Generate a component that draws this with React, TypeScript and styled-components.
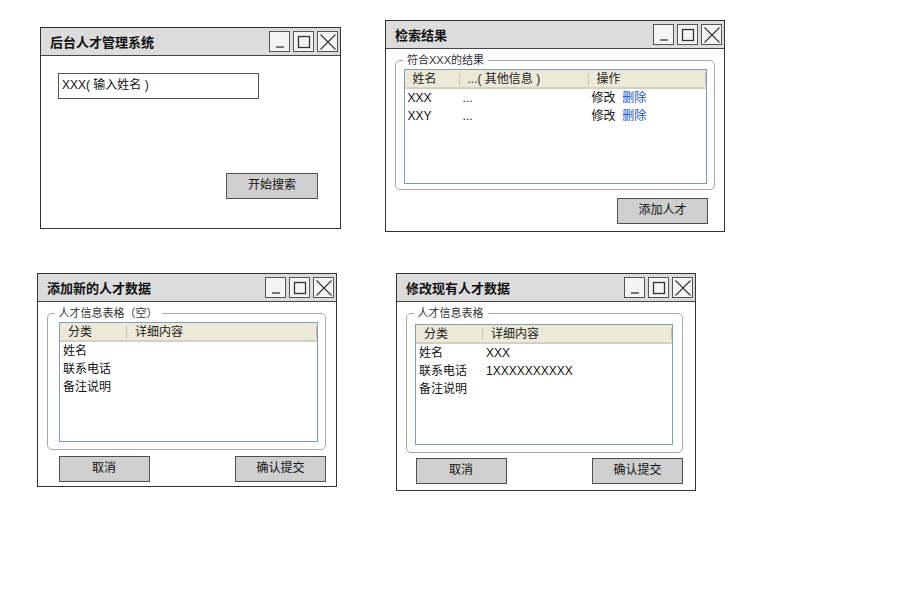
import React from 'react';
import styled, { createGlobalStyle } from 'styled-components';

const GlobalStyles = createGlobalStyle`
  html, body {
    margin: 0;
    padding: 0;
    background: #ffffff;
  }
  body {
    font-family: 'Liberation Sans', 'Noto Sans CJK SC', sans-serif;
    color: #1a1a1a;
  }
`;

const Canvas = styled.div`
  position: relative;
  width: 911px;
  height: 609px;
  background: #ffffff;
  overflow: hidden;
`;

interface IWin {
  $x: number;
  $y: number;
  $w: number;
  $h: number;
}

const WindowFrame = styled.div<IWin>`
  position: absolute;
  left: ${p => p.$x}px;
  top: ${p => p.$y}px;
  width: ${p => p.$w}px;
  height: ${p => p.$h}px;
  box-sizing: border-box;
  border: 1.5px solid #333;
  background: #ffffff;
  display: flex;
  flex-direction: column;
`;

const TitleBar = styled.div`
  height: 28px;
  flex: 0 0 28px;
  box-sizing: border-box;
  background: #dcdcdc;
  border-bottom: 1.5px solid #444;
  display: flex;
  align-items: center;
  padding-left: 9px;
  padding-right: 2px;
`;

const Title = styled.span`
  font-size: 13px;
  font-weight: 700;
  color: #111;
`;

const Controls = styled.div`
  margin-left: auto;
  display: flex;
  gap: 3px;
`;

const CtrlBtn = styled.div`
  width: 21px;
  height: 21px;
  box-sizing: border-box;
  border: 1.5px solid #555;
  background: #f4f4f4;
  display: flex;
  align-items: center;
  justify-content: center;
  svg {
    display: block;
  }
`;

const Body = styled.div<{ $pad: string }>`
  flex: 1;
  display: flex;
  flex-direction: column;
  padding: ${p => p.$pad};
`;

const InputBox = styled.div`
  width: 201px;
  height: 26px;
  box-sizing: border-box;
  border: 1.5px solid #555;
  font-size: 12px;
  line-height: 23px;
  padding-left: 3px;
  color: #111;
`;

const Btn = styled.div<{ $w?: number }>`
  width: ${p => p.$w ?? 91}px;
  height: 26px;
  box-sizing: border-box;
  border: 1.5px solid #505050;
  background: #cfcfcf;
  font-size: 12px;
  line-height: 23px;
  text-align: center;
  color: #111;
`;

const BtnRow = styled.div<{ $justify: string; $m: string }>`
  display: flex;
  justify-content: ${p => p.$justify};
  margin: ${p => p.$m};
`;

const Group = styled.div<{ $h: number; $pad: string }>`
  position: relative;
  height: ${p => p.$h}px;
  box-sizing: border-box;
  border: 1.5px solid #a9a9a2;
  border-radius: 5px;
  padding: ${p => p.$pad};
  display: flex;
`;

const Legend = styled.span`
  position: absolute;
  top: -8px;
  left: 7px;
  background: #ffffff;
  padding: 0 4px;
  font-size: 11px;
  line-height: 14px;
  color: #333;
`;

const TableBox = styled.div`
  flex: 1;
  box-sizing: border-box;
  border: 1px solid #7f9db9;
  background: #ffffff;
  display: flex;
  flex-direction: column;
`;

const Row = styled.div<{ $cols: string }>`
  display: grid;
  grid-template-columns: ${p => p.$cols};
  height: 18px;
  font-size: 12px;
  line-height: 18px;
`;

const HeadRow = styled(Row)`
  height: 17px;
  line-height: 18px;
  background: #ece9d8;
  border-bottom: 2px solid #d5d1c1;
`;

const HeadCell = styled.div`
  padding-left: 8px;
  color: #222;
  background: linear-gradient(#c6c2b2, #c6c2b2) right center / 1px 12px
    no-repeat;
  white-space: nowrap;
`;

const Cell = styled.div`
  padding-left: 3px;
  white-space: nowrap;
  color: #111;
`;

const Link = styled.span`
  color: #1553c9;
`;

const Spacer = styled.div`
  flex: 1;
`;

const WinControls = () => (
  <Controls>
    <CtrlBtn>
      <svg width="18" height="18" viewBox="0 0 18 18">
        <line x1="5" y1="14" x2="13" y2="14" stroke="#333" strokeWidth="1.3" />
      </svg>
    </CtrlBtn>
    <CtrlBtn>
      <svg width="18" height="18" viewBox="0 0 18 18">
        <rect x="3.5" y="3.5" width="11" height="11" fill="none" stroke="#333" strokeWidth="1.3" />
      </svg>
    </CtrlBtn>
    <CtrlBtn>
      <svg width="18" height="18" viewBox="0 0 18 18">
        <path d="M1.5 1.5 L16.5 16.5 M16.5 1.5 L1.5 16.5" stroke="#333" strokeWidth="1.1" />
      </svg>
    </CtrlBtn>
  </Controls>
);

interface IWindow extends IWin {
  title: string;
  children?: React.ReactNode;
}

const Window: React.FC<IWindow> = ({ title, children, ...pos }) => (
  <WindowFrame {...pos}>
    <TitleBar>
      <Title>{title}</Title>
      <WinControls />
    </TitleBar>
    {children}
  </WindowFrame>
);

const resultCols = '55px 129px 1fr';
const infoCols = '67px 1fr';

const results = [
  { name: 'XXX', other: '...' },
  { name: 'XXY', other: '...' },
];

const infoRows = ['姓名', '联系电话', '备注说明'];

export default function App() {
  return (
    <>
      <GlobalStyles />
      <Canvas>
        <Window $x={40} $y={27} $w={301} $h={202} title="后台人才管理系统">
          <Body $pad="17px 22px 29px 17px">
            <InputBox>XXX( 输入姓名 )</InputBox>
            <Spacer />
            <BtnRow $justify="flex-end" $m="0">
              <Btn $w={92}>开始搜索</Btn>
            </BtnRow>
          </Body>
        </Window>

        <Window $x={385} $y={20} $w={340} $h={212} title="检索结果">
          <Body $pad="11px 9px 0 9px">
            <Group $h={130} $pad="8px 7px 5px 7.5px">
              <Legend>符合XXX的结果</Legend>
              <TableBox>
                <HeadRow $cols={resultCols}>
                  <HeadCell>姓名</HeadCell>
                  <HeadCell>...( 其他信息 )</HeadCell>
                  <HeadCell>操作</HeadCell>
                </HeadRow>
                {results.map(r => (
                  <Row key={r.name} $cols={resultCols}>
                    <Cell>{r.name}</Cell>
                    <Cell>{r.other}</Cell>
                    <Cell>
                      修改&nbsp;&nbsp;<Link>删除</Link>
                    </Cell>
                  </Row>
                ))}
              </TableBox>
            </Group>
            <BtnRow $justify="flex-end" $m="8px 7px 0 0">
              <Btn>添加人才</Btn>
            </BtnRow>
          </Body>
        </Window>

        <Window $x={37} $y={273} $w={300} $h={214} title="添加新的人才数据">
          <Body $pad="11px 10px 0 8.5px">
            <Group $h={137} $pad="8px 7.5px 7px 11.5px">
              <Legend>人才信息表格（空）</Legend>
              <TableBox>
                <HeadRow $cols={infoCols}>
                  <HeadCell>分类</HeadCell>
                  <HeadCell>详细内容</HeadCell>
                </HeadRow>
                {infoRows.map(label => (
                  <Row key={label} $cols={infoCols}>
                    <Cell>{label}</Cell>
                    <Cell />
                  </Row>
                ))}
              </TableBox>
            </Group>
            <BtnRow $justify="space-between" $m="6px 0 0 12px">
              <Btn>取消</Btn>
              <Btn>确认提交</Btn>
            </BtnRow>
          </Body>
        </Window>

        <Window $x={396} $y={273} $w={300} $h={218} title="修改现有人才数据">
          <Body $pad="11px 12px 0 8.5px">
            <Group $h={140} $pad="10px 9px 7px 8.5px">
              <Legend>人才信息表格</Legend>
              <TableBox>
                <HeadRow $cols={infoCols}>
                  <HeadCell>分类</HeadCell>
                  <HeadCell>详细内容</HeadCell>
                </HeadRow>
                <Row $cols={infoCols}>
                  <Cell>姓名</Cell>
                  <Cell>XXX</Cell>
                </Row>
                <Row $cols={infoCols}>
                  <Cell>联系电话</Cell>
                  <Cell>1XXXXXXXXXX</Cell>
                </Row>
                <Row $cols={infoCols}>
                  <Cell>备注说明</Cell>
                  <Cell />
                </Row>
              </TableBox>
            </Group>
            <BtnRow $justify="space-between" $m="5px 0 0 10px">
              <Btn>取消</Btn>
              <Btn>确认提交</Btn>
            </BtnRow>
          </Body>
        </Window>
      </Canvas>
    </>
  );
}
